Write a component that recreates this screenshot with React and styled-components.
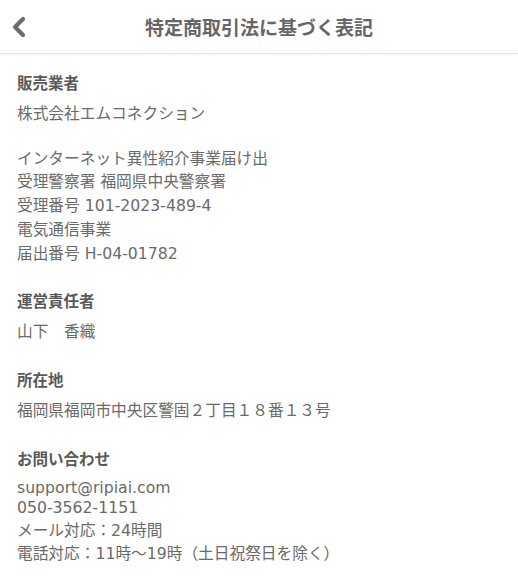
import styled, { createGlobalStyle } from "styled-components";

const GlobalStyle = createGlobalStyle`
  html, body {
    margin: 0;
    padding: 0;
    background: #fff;
  }
  body {
    font-family: "DejaVu Sans", "Noto Sans CJK JP", sans-serif;
    -webkit-font-smoothing: antialiased;
  }
`;

const Page = styled.div`
  width: 518px;
  min-height: 576px;
  background: #fff;
`;

const Header = styled.header`
  height: 53px;
  border-bottom: 1px solid #e6e6e6;
  box-shadow: 0 1px 2px rgba(0, 0, 0, 0.04);
  display: flex;
  align-items: center;
  justify-content: center;
  position: relative;
`;

const BackButton = styled.button`
  position: absolute;
  left: 6px;
  top: 13px;
  width: 26px;
  height: 28px;
  padding: 0;
  border: none;
  background: none;
  display: flex;
  align-items: center;
  justify-content: center;
  cursor: pointer;
`;

const Title = styled.h1`
  margin: 0;
  font-family: "Noto Sans CJK JP", sans-serif;
  font-size: 19px;
  font-weight: 700;
  color: #666;
`;

const Content = styled.main`
  padding: 16px 17px 0;
  display: flex;
  flex-direction: column;
  gap: 23px;
`;

const Section = styled.section`
  display: flex;
  flex-direction: column;
`;

const Heading = styled.h2`
  margin: 0 0 8px;
  font-family: "Noto Sans CJK JP", sans-serif;
  font-size: 15.5px;
  line-height: 24px;
  font-weight: 700;
  color: #595959;
`;

const Body = styled.div`
  display: flex;
  flex-direction: column;
  font-size: 15.7px;
  color: #6a6a6a;
`;

const Line = styled.div`
  line-height: ${(p) => (p.$tight ? "20.5px" : "23.7px")};
  white-space: pre;
`;

const Gap = styled.div`
  height: 21px;
`;

const ChevronIcon = () => (
  <svg width="18" height="24" viewBox="0 0 18 24">
    <polyline
      points="13,4 5,12 13,20"
      fill="none"
      stroke="#6b6b6b"
      strokeWidth="4.2"
      strokeLinecap="round"
      strokeLinejoin="round"
    />
  </svg>
);

const sections = [
  {
    title: "販売業者",
    lines: [
      { text: "株式会社エムコネクション" },
      { gap: true },
      { text: "インターネット異性紹介事業届け出" },
      { text: "受理警察署 福岡県中央警察署" },
      { text: "受理番号 101-2023-489-4" },
      { text: "電気通信事業" },
      { text: "届出番号 H-04-01782" },
    ],
  },
  {
    title: "運営責任者",
    lines: [{ text: "山下　香織" }],
  },
  {
    title: "所在地",
    lines: [{ text: "福岡県福岡市中央区警固２丁目１８番１３号" }],
  },
  {
    title: "お問い合わせ",
    lines: [
      { text: "support@ripiai.com", tight: true },
      { text: "050-3562-1151", tight: true },
      { text: "メール対応：24時間" },
      { text: "電話対応：11時～19時（土日祝祭日を除く）" },
    ],
  },
];

const App = () => {
  return (
    <Page>
      <GlobalStyle />
      <Header>
        <BackButton aria-label="戻る">
          <ChevronIcon />
        </BackButton>
        <Title>特定商取引法に基づく表記</Title>
      </Header>
      <Content>
        {sections.map((s) => (
          <Section key={s.title}>
            <Heading>{s.title}</Heading>
            <Body>
              {s.lines.map((l, i) =>
                l.gap ? (
                  <Gap key={i} />
                ) : (
                  <Line key={i} $tight={l.tight}>
                    {l.text}
                  </Line>
                )
              )}
            </Body>
          </Section>
        ))}
      </Content>
    </Page>
  );
};

export default App;
